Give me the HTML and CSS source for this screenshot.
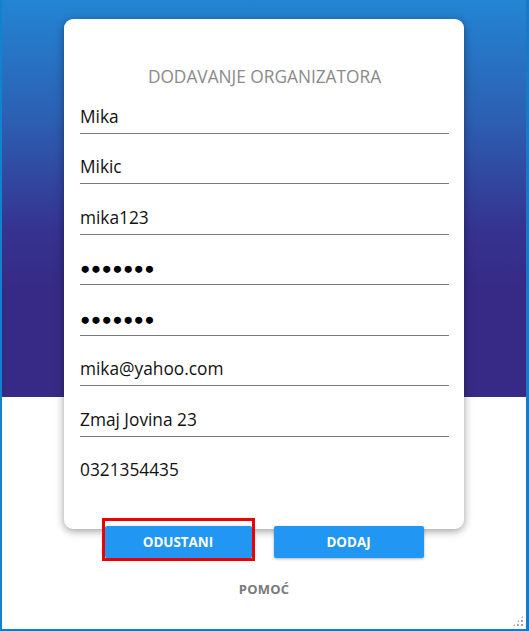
FILE: index.html
```html
<!DOCTYPE html>
<html lang="sr">
<head>
<meta charset="utf-8">
<title>Dodavanje organizatora</title>
<link rel="stylesheet" href="styles.css">
</head>
<body>
<div class="window">
  <div class="stage">
    <div class="card">
      <h1 class="title">DODAVANJE ORGANIZATORA</h1>
      <div class="field"><span class="value">Mika</span></div>
      <div class="field"><span class="value">Mikic</span></div>
      <div class="field"><span class="value">mika123</span></div>
      <div class="field"><span class="value dots">●●●●●●●</span></div>
      <div class="field"><span class="value dots">●●●●●●●</span></div>
      <div class="field"><span class="value">mika@yahoo.com</span></div>
      <div class="field"><span class="value">Zmaj Jovina 23</span></div>
      <div class="field plain"><span class="value">0321354435</span></div>
    </div>
    <div class="actions">
      <button class="btn btn-cancel">ODUSTANI<span class="highlight"></span></button>
      <button class="btn btn-add">DODAJ</button>
    </div>
    <div class="help">POMOĆ</div>
    <div class="grip"></div>
  </div>
</div>
</body>
</html>
```

FILE: styles.css
```css
* { box-sizing: border-box; }
html, body { margin: 0; padding: 0; }
body {
  width: 529px;
  height: 631px;
  font-family: "Open Sans", "Noto Sans", sans-serif;
  background: #fff;
}
.window {
  width: 529px;
  height: 631px;
  border-left: 2px solid #1083d0;
  border-right: 3px solid #1a79c4;
  border-bottom: 2px solid #1a79c4;
}
.stage {
  position: relative;
  height: 100%;
  display: flex;
  flex-direction: column;
  align-items: center;
  background: linear-gradient(to bottom, #2385d3 0px, #2c5fb2 120px, #35338f 230px, #372a86 290px, #372a86 397px, #ffffff 397px, #ffffff 100%);
}
.card {
  margin-top: 19px;
  width: 400px;
  height: 510px;
  background: #fff;
  border-radius: 9px;
  box-shadow: 0 2px 8px rgba(0, 0, 0, 0.4);
  padding: 0 15px 0 16px;
  display: flex;
  flex-direction: column;
}
.title {
  margin: 46px 0 -6px;
  font-weight: 400;
  font-size: 17.3px;
  color: #8a8a8a;
  text-align: center;
  line-height: 24px;
}
.field {
  flex: none;
  height: 50.5px;
  border-bottom: 1px solid #7a7a7a;
  display: flex;
  align-items: flex-end;
  padding-bottom: 4px;
}
.field.plain { border-bottom-color: transparent; }
.value {
  font-size: 17.3px;
  color: #111;
  line-height: 24px;
}
.dots {
  font-size: 16.6px;
  letter-spacing: 0.7px;
  color: #000;
}
.actions {
  margin-top: -3px;
  display: flex;
  gap: 22px;
}
.btn {
  position: relative;
  height: 32px;
  border: none;
  border-radius: 2px;
  background: #2196f3;
  color: #fff;
  font-family: "Open Sans", "Noto Sans", sans-serif;
  font-weight: 700;
  font-size: 13.4px;
  box-shadow: 0 1px 3px rgba(0, 0, 0, 0.3);
  padding: 0;
}
.btn-cancel { width: 147px; }
.btn-add { width: 150px; }
.highlight {
  position: absolute;
  top: -8px;
  left: -3px;
  right: -3px;
  bottom: -3px;
  border: 3px solid #ee0000;
  pointer-events: none;
}
.help {
  margin-top: 22px;
  font-size: 13px;
  font-weight: 700;
  color: #7a7a7a;
  letter-spacing: 0.2px;
}
.grip {
  position: absolute;
  right: 2px;
  bottom: 2px;
  width: 12px;
  height: 12px;
  background-image: radial-gradient(circle, #9ab 1px, transparent 1.2px);
  background-size: 4px 4px;
  clip-path: polygon(100% 0, 100% 100%, 0 100%);
}
```
